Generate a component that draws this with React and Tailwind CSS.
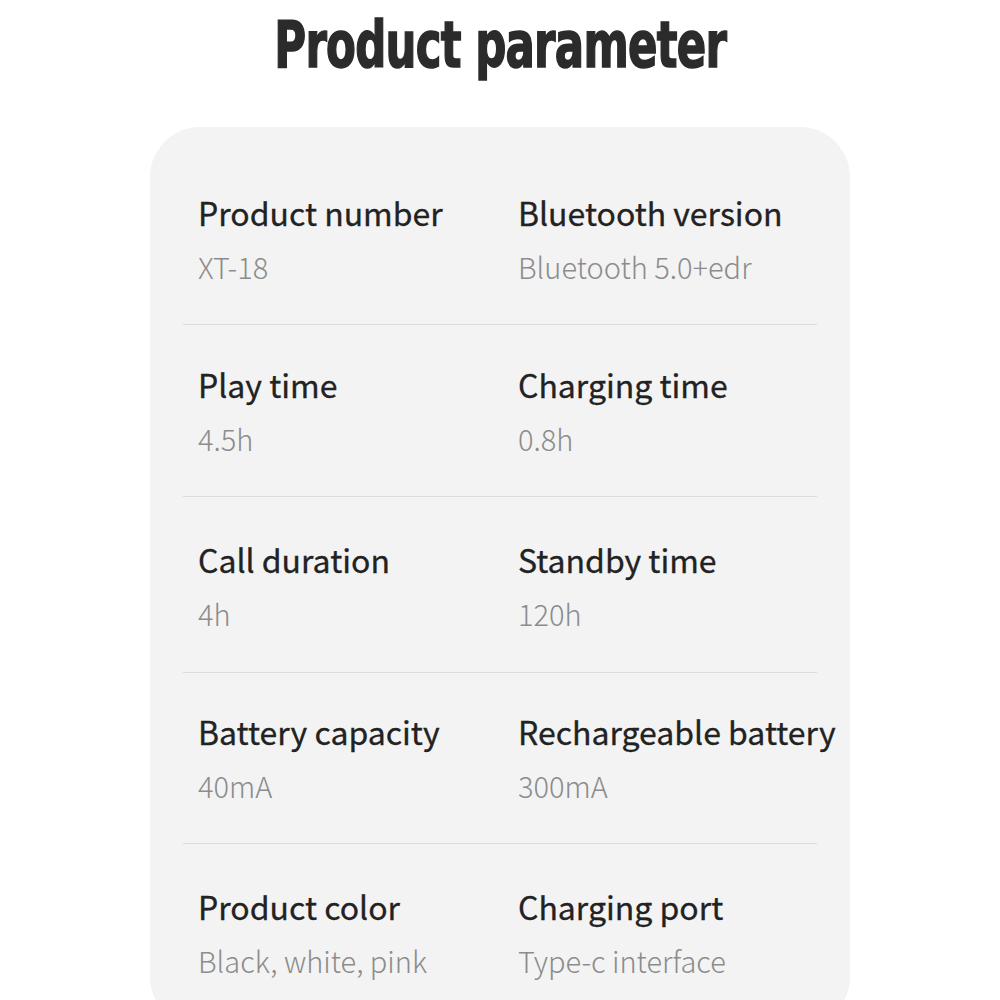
import React from 'react';

const rows = [
  { pad: 'pt-[65px] pb-[38px]', items: [['Product number', 'XT-18'], ['Bluetooth version', 'Bluetooth 5.0+edr']] },
  { pad: 'pt-[39px] pb-[38px]', items: [['Play time', '4.5h'], ['Charging time', '0.8h']] },
  { pad: 'pt-[42px] pb-[39px]', items: [['Call duration', '4h'], ['Standby time', '120h']] },
  { pad: 'pt-[38px] pb-[38px]', items: [['Battery capacity', '40mA'], ['Rechargeable battery', '300mA']] },
  { pad: 'pt-[42px] pb-[36px]', items: [['Product color', 'Black, white, pink'], ['Charging port', 'Type-c interface']] },
];

const Cell = ({ label, value }) => (
  <div className="flex flex-col">
    <div className="text-[32px] leading-[40px] text-[#222] whitespace-nowrap [-webkit-text-stroke:0.3px_#222]">{label}</div>
    <div className="mt-[14px] text-[29px] leading-[40px] text-[#8c8c8c] font-light whitespace-nowrap">{value}</div>
  </div>
);

const App = () => {
  return (
    <div className="w-[1000px] h-[1000px] overflow-hidden bg-white" style={{ fontFamily: '"Noto Sans CJK SC", "Noto Sans", sans-serif' }}>
      <div className="h-[90px] flex items-center justify-center">
        <h1
          className="text-[64px] font-bold text-[#2b2b2b] leading-none whitespace-nowrap scale-x-[0.755] tracking-[-1px] [-webkit-text-stroke:1.5px_#2b2b2b]"
          style={{ fontFamily: '"DejaVu Sans Condensed", "DejaVu Sans", sans-serif' }}
        >
          Product parameter
        </h1>
      </div>
      <div className="mt-[37px] mx-auto w-[700px] h-[900px] rounded-[50px] bg-[#f3f3f3] px-[33px]">
        {rows.map((row, i) => (
          <div
            key={i}
            className={`grid grid-cols-[320px_1fr] pl-[15px] ${row.pad} ${i === rows.length - 1 ? '' : 'border-b border-[#dcdcdc]'}`}
          >
            <Cell label={row.items[0][0]} value={row.items[0][1]} />
            <Cell label={row.items[1][0]} value={row.items[1][1]} />
          </div>
        ))}
      </div>
    </div>
  );
};

export default App;
